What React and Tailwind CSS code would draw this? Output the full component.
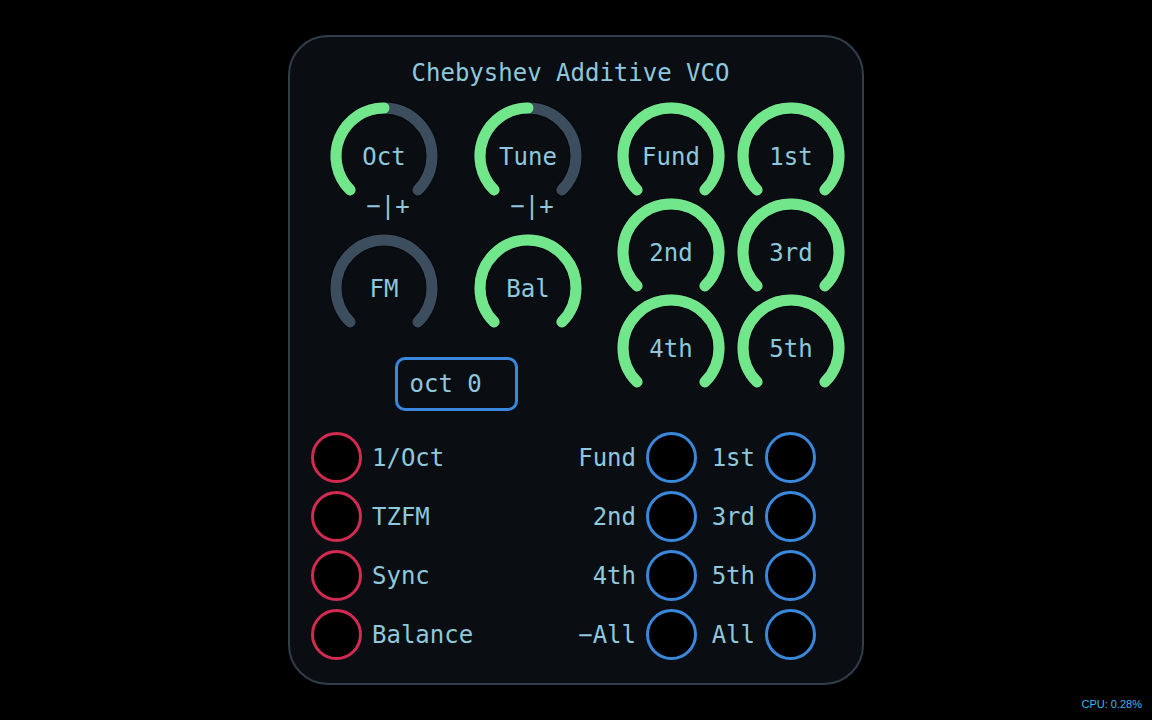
import React from "react";

const MONO = "font-['DejaVu_Sans_Mono',monospace]";

function polar(a, r) {
  const rad = (a * Math.PI) / 180;
  return [55 + r * Math.sin(rad), 55 - r * Math.cos(rad)];
}

function arc(a0, a1, r = 48) {
  const [x0, y0] = polar(a0, r);
  const [x1, y1] = polar(a1, r);
  const large = a1 - a0 > 180 ? 1 : 0;
  return `M ${x0} ${y0} A ${r} ${r} 0 ${large} 1 ${x1} ${y1}`;
}

function Knob({ label, value }) {
  const end = -135 + 270 * value;
  return (
    <svg width="110" height="96" viewBox="0 0 110 96" className="block overflow-visible">
      {/* dark outline under the ring */}
      <path d={arc(-135, 135)} stroke="#05080b" strokeWidth="13" fill="none" strokeLinecap="round" />
      <path d={arc(-135, 135)} stroke="#3c4e5d" strokeWidth="11" fill="none" strokeLinecap="round" />
      {value > 0 && (
        <path d={arc(-135, end)} stroke="#72e68b" strokeWidth="11" fill="none" strokeLinecap="round" />
      )}
      <text
        x="55"
        y="56"
        textAnchor="middle"
        dominantBaseline="central"
        fill="#8fc8dc"
        fontSize="24"
        fontFamily="'DejaVu Sans Mono', monospace"
      >
        {label}
      </text>
    </svg>
  );
}

function Jack({ color }) {
  return (
    <div
      className={
        "w-[51px] h-[51px] rounded-full border-[3px] bg-black " +
        (color === "red" ? "border-[#d22a50]" : "border-[#3a88dc]")
      }
    ></div>
  );
}

const rows = [
  ["1/Oct", "Fund", "1st"],
  ["TZFM", "2nd", "3rd"],
  ["Sync", "4th", "5th"],
  ["Balance", "−All", "All"],
];

export default function App() {
  return (
    <div className={"w-full h-[720px] bg-black flex items-center justify-center relative " + MONO}>
      <div className="w-[576px] h-[650px] rounded-[40px] border-2 border-[#303e4b] bg-[#0a0e13] flex flex-col text-[#8fc8dc] text-[24px]">
        {/* title */}
        <div className="pt-[24px] pr-[11px] h-[48px] leading-[24px] text-center">
          Chebyshev Additive VCO
        </div>

        {/* knobs */}
        <div className="mt-[16px] flex items-start pl-[39px] gap-[33px]">
          <div className="w-[254px] flex flex-col">
            <div className="flex gap-[34px]">
              <Knob label="Oct" value={0.5} />
              <Knob label="Tune" value={0.5} />
            </div>
            <div className="flex gap-[34px] h-[36px] leading-[18px]">
              <div className="w-[110px] text-center pl-[8px]">−|+</div>
              <div className="w-[110px] text-center pl-[8px]">−|+</div>
            </div>
            <div className="flex gap-[34px]">
              <Knob label="FM" value={0} />
              <Knob label="Bal" value={1} />
            </div>
            <div className="mt-[28px] flex justify-center">
              <div className="w-[123px] h-[54px] rounded-[10px] border-[3px] border-[#3a88dc] flex items-center pl-[12px] leading-none">
                oct 0
              </div>
            </div>
          </div>
          <div className="grid grid-cols-[110px_110px] grid-rows-[96px_96px_96px] gap-x-[10px]">
            <Knob label="Fund" value={1} />
            <Knob label="1st" value={1} />
            <Knob label="2nd" value={1} />
            <Knob label="3rd" value={1} />
            <Knob label="4th" value={1} />
            <Knob label="5th" value={1} />
          </div>
        </div>

        {/* jacks */}
        <div className="mt-[21px] pl-[21px] grid grid-cols-[51px_173px_81px_51px_48px_51px] gap-x-[10px] gap-y-[8px] items-center leading-none">
          {rows.map((r) => (
            <React.Fragment key={r[0]}>
              <Jack color="red" />
              <div>{r[0]}</div>
              <div className="text-right">{r[1]}</div>
              <Jack color="blue" />
              <div className="text-right">{r[2]}</div>
              <Jack color="blue" />
            </React.Fragment>
          ))}
        </div>
      </div>

      <div className="absolute right-[10px] bottom-[8px] text-[11px] text-[#42b8ef] font-['Liberation_Sans',sans-serif]">
        CPU: 0.28%
      </div>
    </div>
  );
}
